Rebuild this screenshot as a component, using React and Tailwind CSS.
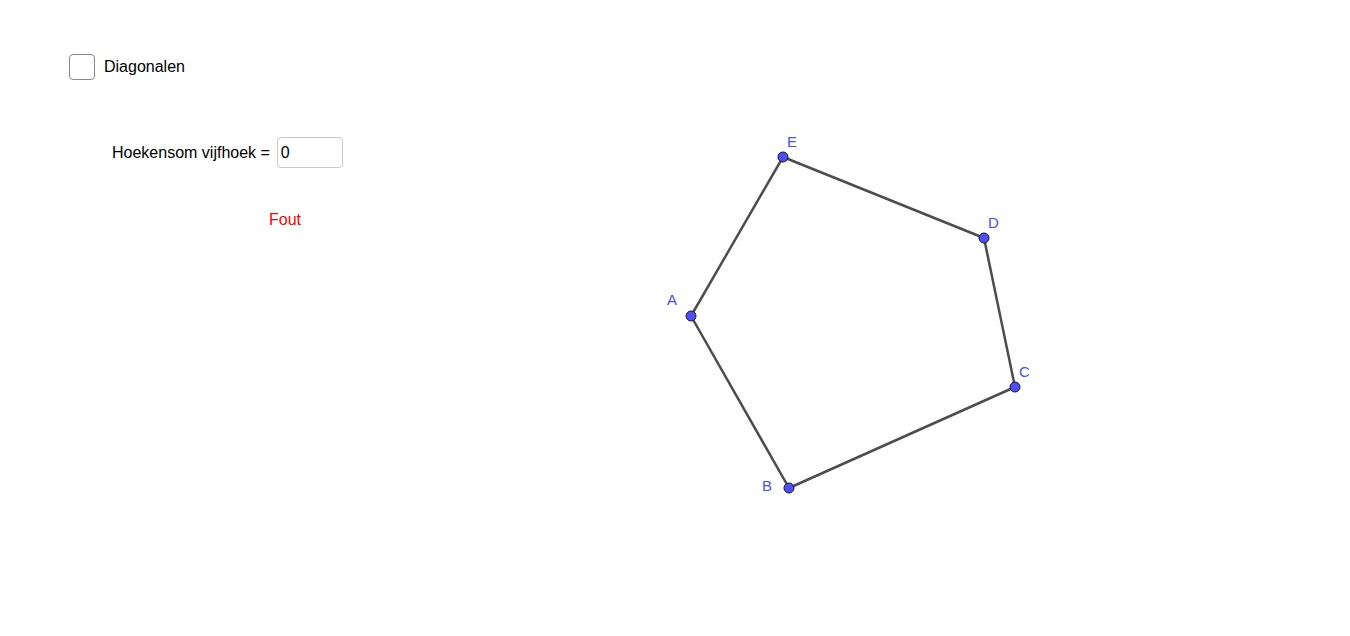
export default function App() {
  const pts = { A: [691, 316], B: [789, 488], C: [1015, 387], D: [984, 238], E: [783, 157] };
  const order = ["A", "B", "C", "D", "E"];
  const poly = order.map((k) => pts[k].join(",")).join(" ");
  const labels = [
    ["E", 787, 147],
    ["D", 988, 228],
    ["C", 1019, 377],
    ["B", 762, 491],
    ["A", 667, 305],
  ];
  return (
    <div className="relative w-[1350px] h-[636px] bg-white overflow-hidden" style={{ fontFamily: '"Liberation Sans", Arial, sans-serif' }}>
      <svg className="absolute left-0 top-0" width="1350" height="636">
        <polygon points={poly} fill="none" stroke="#4d4d4d" strokeWidth="2.5" strokeLinejoin="round" />
        {order.map((k) => (
          <circle key={k} cx={pts[k][0]} cy={pts[k][1]} r="5" fill="#4d4dff" stroke="#1a1a1a" strokeWidth="1" />
        ))}
        {labels.map(([t, x, y]) => (
          <text key={t} x={x} y={y} fill="#4d4dff" fontSize="15" fontFamily='"Liberation Sans", Arial, sans-serif'>
            {t}
          </text>
        ))}
      </svg>
      <div className="absolute left-[69px] top-[54px] flex items-center gap-[9px]">
        <div className="w-[26px] h-[26px] rounded-[4px] border border-[#8a8a8a] bg-white" />
        <span className="text-[16px] text-black leading-none">Diagonalen</span>
      </div>
      <div className="absolute left-[112px] top-[137px] flex items-center gap-[7px]">
        <span className="text-[16px] text-black leading-none">Hoekensom vijfhoek =</span>
        <div className="w-[66px] h-[31px] rounded-[4px] border border-[#c8c8c8] bg-white flex items-center pl-[3px] text-[16px] text-black">0</div>
      </div>
      <div className="absolute left-[269px] top-[212px] text-[16px] text-[#ff0000] leading-none">Fout</div>
    </div>
  );
}
